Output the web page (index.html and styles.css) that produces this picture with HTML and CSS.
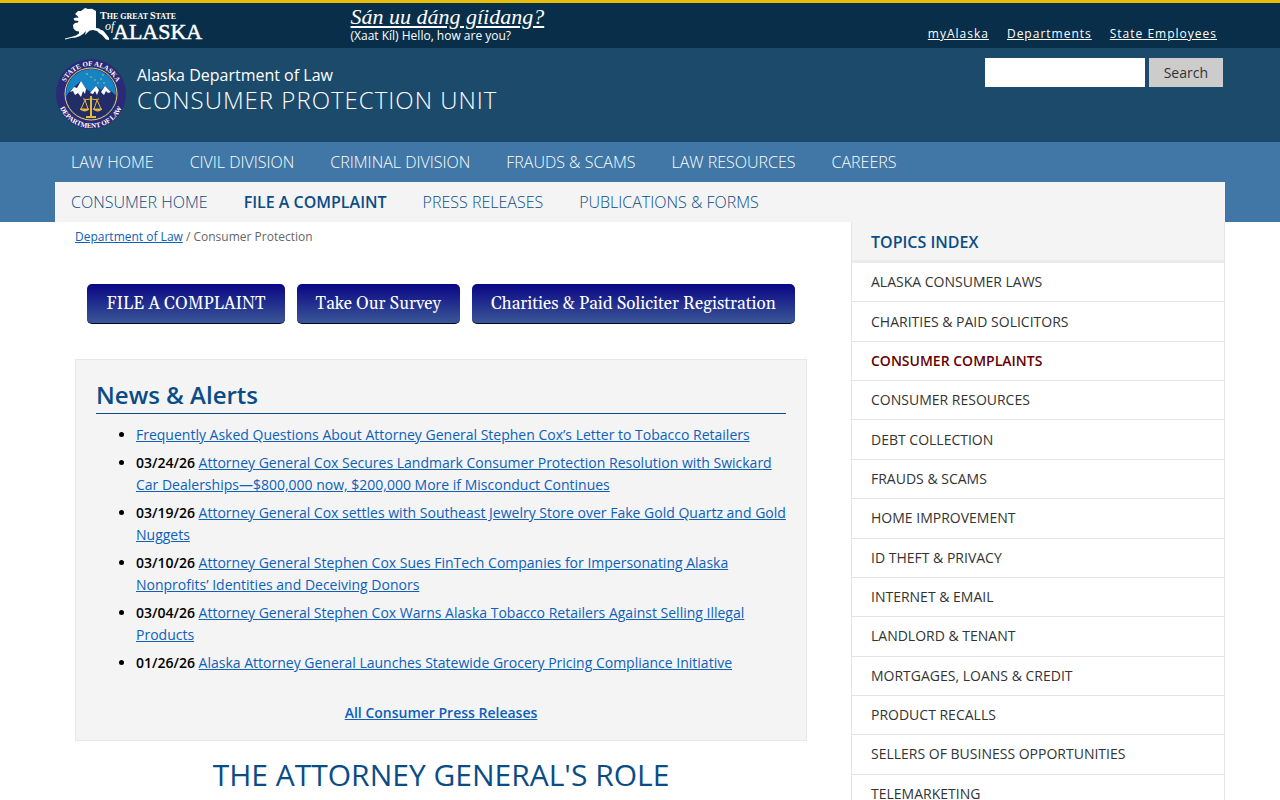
FILE: index.html
```html
<!DOCTYPE html>
<html lang="en">
<head>
    <meta charset="UTF-8">
    <meta name="viewport" content="width=device-width, initial-scale=1.0">
    <title>Consumer Protection Unit - Alaska Department of Law</title>
    <link rel="stylesheet" href="styles.css">
</head>
<body>
    <div class="topbar">
        <div class="container topbar-inner">
            <a href="#" class="state-logo" aria-label="The Great State of Alaska">
                <svg width="142" height="38" viewBox="0 0 142 38">
                    <path fill="#fff" d="M10 7 L13 4 L16 4 L20 1 L23 2 L27 1.7 L31 4 L31 21 L34 21.5 L36 23 L38 23.5 L41 27 L44 31 L44 33 L41 32.5 L37 28 L34 26 L32 24 L28 23 L25 23.5 L23 25 L20 28 L21 24 L18 27 L15 29 L11 30.5 L6 31 L0 32.5 L0 31.5 L6 30 L11 28.5 L14 26.5 L14 24.5 L11 24 L8.5 21.5 L8 18 L10 16 L13 15.5 L13.5 14 L9.5 13.5 L8.5 11.5 L11 10.5 L13.5 11 L12.5 9 Z"/>
                    <text class="logo-small" x="35" y="12">T<tspan class="logo-caps">HE GREAT </tspan>S<tspan class="logo-caps">TATE</tspan></text>
                    <text class="logo-of" x="40" y="23">of</text>
                    <text class="logo-name" x="48" y="32">ALASKA</text>
                </svg>
            </a>
            <div class="phrase">
                <a href="#" class="phrase-native">Sán uu dáng gíidang?</a>
                <span class="phrase-english">(Xaat Kíl) Hello, how are you?</span>
            </div>
            <nav class="state-links" aria-label="State">
                <a href="#">myAlaska</a>
                <a href="#">Departments</a>
                <a href="#">State Employees</a>
            </nav>
        </div>
    </div>

    <header class="masthead">
        <div class="container masthead-inner">
            <svg class="seal" width="72" height="72" viewBox="0 0 72 72" role="img" aria-label="Department of Law seal">
                <defs>
                    <path id="arc-top" d="M8 36 A28 28 0 0 1 64 36"/>
                    <path id="arc-bottom" d="M2 36 A34 34 0 0 0 70 36"/>
                    <clipPath id="seal-clip"><circle cx="36" cy="36" r="25"/></clipPath>
                </defs>
                <circle cx="36" cy="36" r="35" fill="#2b2a78"/>
                <g clip-path="url(#seal-clip)">
                    <rect x="10" y="10" width="52" height="52" fill="#1583c4"/>
                    <path d="M8 42 L15 33 L19 29 L26 23 L31 31 L36 34 L41 28 L46 32 L50 28 L56 33 L64 40 V64 H8 Z" fill="#222c66"/>
                    <path d="M15 34 L19 29 L22 30 L26 23 L31 31 L30 36 L28 33 L26 39 L23 35 L20 37 L18 33 Z" fill="#fff"/>
                    <path d="M35 35 L41 28 L44 32 L42 37 L40 33 L38 36 Z" fill="#fff"/>
                    <path d="M46 34 L50 28 L56 34 L53 35 L51 33 L49 37 Z" fill="#fff"/>
                </g>
                <circle cx="36" cy="36" r="26" fill="none" stroke="#e6d264"/>
                <g fill="#b9cf6a">
                    <circle cx="32" cy="16" r="0.8"/><circle cx="36" cy="19" r="0.8"/><circle cx="40" cy="22" r="0.8"/><circle cx="46" cy="21" r="0.8"/>
                    <circle cx="49" cy="25" r="0.8"/><circle cx="43" cy="25" r="0.8"/><circle cx="48" cy="17" r="0.8"/>
                </g>
                <g fill="none" stroke="#e3b93f">
                    <path d="M36 38 V58" stroke-width="2"/>
                    <path d="M28 41 Q32 42 36 41 Q40 42 44 41"/>
                    <path d="M30 42 L26 51 M30 42 L33 51 M42 42 L39 51 M42 42 L46 51"/>
                    <path d="M25 51 H34 Q30 55 25 51 Z M38 51 H47 Q43 55 38 51 Z" fill="#e3b93f"/>
                    <path d="M31 59 H41" stroke-width="2"/>
                </g>
                <text class="seal-text"><textPath href="#arc-top" startOffset="50%" text-anchor="middle">STATE OF ALASKA</textPath></text>
                <text class="seal-text"><textPath href="#arc-bottom" startOffset="50%" text-anchor="middle">DEPARTMENT OF LAW</textPath></text>
            </svg>
            <div class="site-title">
                <a href="#" class="dept-name">Alaska Department of Law</a>
                <a href="#" class="unit-name">Consumer Protection Unit</a>
            </div>
            <form class="search" action="#">
                <input type="text" name="q" aria-label="Search">
                <button type="submit">Search</button>
            </form>
        </div>
    </header>

    <div class="nav-wrap">
        <div class="container">
            <nav class="main-nav" aria-label="Main">
                <a href="#">Law Home</a>
                <a href="#">Civil Division</a>
                <a href="#">Criminal Division</a>
                <a href="#">Frauds &amp; Scams</a>
                <a href="#">Law Resources</a>
                <a href="#">Careers</a>
            </nav>
            <nav class="main-nav sub-nav" aria-label="Consumer">
                <a href="#">Consumer Home</a>
                <a href="#" class="active">File a Complaint</a>
                <a href="#">Press Releases</a>
                <a href="#">Publications &amp; Forms</a>
            </nav>
        </div>
    </div>

    <div class="container columns">
        <main class="content">
            <div class="breadcrumbs"><a href="#">Department of Law</a> / Consumer Protection</div>

            <div class="actions">
                <a href="#" class="action-button">FILE A COMPLAINT</a>
                <a href="#" class="action-button">Take Our Survey</a>
                <a href="#" class="action-button">Charities &amp; Paid Soliciter Registration</a>
            </div>

            <section class="news">
                <h2>News &amp; Alerts</h2>
                <ul>
                    <li><a href="#">Frequently Asked Questions About Attorney General Stephen Cox’s Letter to Tobacco Retailers</a></li>
                    <li><strong>03/24/26</strong> <a href="#">Attorney General Cox Secures Landmark Consumer Protection Resolution with Swickard Car Dealerships—$800,000 now, $200,000 More if Misconduct Continues</a></li>
                    <li><strong>03/19/26</strong> <a href="#">Attorney General Cox settles with Southeast Jewelry Store over Fake Gold Quartz and Gold Nuggets</a></li>
                    <li><strong>03/10/26</strong> <a href="#">Attorney General Stephen Cox Sues FinTech Companies for Impersonating Alaska Nonprofits’ Identities and Deceiving Donors</a></li>
                    <li><strong>03/04/26</strong> <a href="#">Attorney General Stephen Cox Warns Alaska Tobacco Retailers Against Selling Illegal Products</a></li>
                    <li><strong>01/26/26</strong> <a href="#">Alaska Attorney General Launches Statewide Grocery Pricing Compliance Initiative</a></li>
                </ul>
                <p class="all-news"><a href="#">All Consumer Press Releases</a></p>
            </section>

            <h1>THE ATTORNEY GENERAL'S ROLE</h1>
        </main>

        <aside class="sidebar">
            <h2>Topics Index</h2>
            <ul>
                <li><a href="#">Alaska Consumer Laws</a></li>
                <li><a href="#">Charities &amp; Paid Solicitors</a></li>
                <li><a href="#" class="active">Consumer Complaints</a></li>
                <li><a href="#">Consumer Resources</a></li>
                <li><a href="#">Debt Collection</a></li>
                <li><a href="#">Frauds &amp; Scams</a></li>
                <li><a href="#">Home Improvement</a></li>
                <li><a href="#">ID Theft &amp; Privacy</a></li>
                <li><a href="#">Internet &amp; Email</a></li>
                <li><a href="#">Landlord &amp; Tenant</a></li>
                <li><a href="#">Mortgages, Loans &amp; Credit</a></li>
                <li><a href="#">Product Recalls</a></li>
                <li><a href="#">Sellers of Business Opportunities</a></li>
                <li><a href="#">Telemarketing</a></li>
            </ul>
        </aside>
    </div>
</body>
</html>
```
FILE: styles.css
```css
* {
    margin: 0;
    padding: 0;
    box-sizing: border-box;
}

html {
    scrollbar-width: none;
}

body {
    font-family: 'Open Sans', sans-serif;
    font-size: 14px;
    line-height: 22px;
    color: #000;
    background: #fff;
}

a {
    color: #0d60bb;
}

ul {
    list-style: none;
}

.container {
    max-width: 1170px;
    margin: 0 auto;
}

/* State bar */
.topbar {
    background: #082e49;
    border-top: 3px solid #e9bd0c;
}

.topbar-inner {
    display: grid;
    grid-template-columns: 25% 1fr auto;
    min-height: 45px;
}

.state-logo {
    padding: 4px 0 0 10px;
}

.state-logo svg {
    display: block;
}

.state-logo text {
    fill: #fff;
    font-family: 'Liberation Serif', serif;
}

.state-logo .logo-small {
    font-size: 10px;
    font-weight: 700;
}

.state-logo .logo-caps {
    font-size: 8px;
}

.state-logo .logo-of {
    font-size: 12px;
    font-style: italic;
}

.state-logo .logo-name {
    font-size: 22px;
    stroke: #fff;
    stroke-width: 0.5px;
}

.phrase {
    display: flex;
    flex-direction: column;
    align-items: flex-start;
    padding: 1px 0 0 3px;
    color: #fff;
}

.phrase-native {
    font: italic 22px/26px 'Palatino Linotype', Palatino, 'Liberation Serif', serif;
    color: #fff;
}

.phrase-english {
    font-size: 12px;
    line-height: 12px;
}

.state-links {
    display: flex;
    align-items: flex-end;
    gap: 18px;
    padding: 0 8px 4px 0;
    font-size: 12px;
    line-height: 20px;
    letter-spacing: 1px;
}

.state-links a {
    color: #fff;
}

/* Department header */
.masthead {
    background: #1b4a6b;
}

.masthead-inner {
    display: flex;
    align-items: flex-start;
    min-height: 94px;
    padding-top: 10px;
}

.seal-text {
    fill: #fff;
    font: 700 7px 'Liberation Serif', serif;
}

.site-title {
    display: flex;
    flex-direction: column;
    flex: 1;
    padding: 4px 0 0 10px;
}

.site-title a {
    color: #fff;
    text-decoration: none;
}

.dept-name {
    font-size: 16px;
    line-height: 26px;
}

.unit-name {
    font-size: 24px;
    font-weight: 300;
    line-height: 24px;
    letter-spacing: 1px;
    text-transform: uppercase;
}

.search {
    display: flex;
    gap: 4px;
    padding-right: 2px;
}

.search input {
    width: 160px;
    height: 29px;
    padding: 0 6px;
    border: 0;
    background: #fff;
    font: 14px 'Open Sans', sans-serif;
}

.search button {
    height: 29px;
    padding: 0 15px;
    border: 0;
    background: #ccc;
    color: #333;
    font: 14px 'Open Sans', sans-serif;
}

/* Navigation */
.nav-wrap {
    background: #4077a6;
}

.main-nav {
    display: flex;
    gap: 4px;
    font-size: 16px;
    font-weight: 300;
    line-height: 40px;
    text-transform: uppercase;
}

.main-nav a {
    padding: 0 16px;
    color: #fff;
    text-decoration: none;
}

.sub-nav {
    background: #f4f4f4;
}

.sub-nav a {
    color: #0a4c86;
}

.sub-nav .active {
    font-weight: 600;
}

/* Page columns */
.columns {
    display: grid;
    grid-template-columns: minmax(0, 1fr) 374px;
}

.content {
    padding: 4px 44px 19px 20px;
}

.breadcrumbs {
    font-size: 12px;
    color: #666;
}

.actions {
    display: flex;
    justify-content: center;
    gap: 12px;
    padding: 36px 0 35px;
}

.action-button {
    padding: 2px 19px 0;
    border-bottom: 1px solid #000033;
    border-radius: 5px;
    background: linear-gradient(#0a0585, #3a5795);
    color: #fff;
    font: 17px/37px Georgia, Gelasio, 'Liberation Serif', serif;
    text-decoration: none;
}

.news {
    padding: 20px 20px 16px;
    border: 1px solid #e8e8e8;
    background: #f4f4f4;
}

.news h2 {
    margin-bottom: 10px;
    padding-bottom: 4px;
    border-bottom: 1px solid #0a4c86;
    color: #0a4c86;
    font-size: 24px;
    font-weight: 600;
    line-height: 29px;
}

.news ul {
    padding-left: 40px;
    list-style: disc;
}

.news li {
    margin-bottom: 6px;
}

.news strong {
    font-weight: 600;
}

.all-news {
    padding-top: 22px;
    font-weight: 600;
    text-align: center;
}

.content h1 {
    padding-top: 14px;
    color: #0a4c86;
    font-size: 30px;
    font-weight: 400;
    line-height: 40px;
    text-align: center;
}

/* Topics list, rows share the height of the main column */
.sidebar {
    display: flex;
    flex-direction: column;
    border: solid #e4e4e4;
    border-width: 0 1px;
}

.sidebar h2 {
    padding: 2px 19px 0;
    border-bottom: 3px solid #ebebeb;
    background: #f4f4f4;
    color: #0a4c86;
    font-size: 16px;
    font-weight: 600;
    line-height: 36px;
    text-transform: uppercase;
}

.sidebar ul {
    display: grid;
    flex: 1;
    grid-auto-rows: 1fr;
}

.sidebar li {
    display: flex;
    align-items: center;
    padding: 8px 19px;
    border-bottom: 1px solid #e4e4e4;
}

.sidebar li a {
    color: #333;
    text-decoration: none;
    text-transform: uppercase;
}

.sidebar li .active {
    color: #660000;
    font-weight: 600;
}

@media (max-width: 900px) {
    .columns {
        grid-template-columns: 1fr;
    }

    .content {
        padding-right: 20px;
    }

    .topbar-inner {
        grid-template-columns: auto auto;
    }

    .main-nav,
    .actions,
    .masthead-inner {
        flex-wrap: wrap;
    }
}
```
